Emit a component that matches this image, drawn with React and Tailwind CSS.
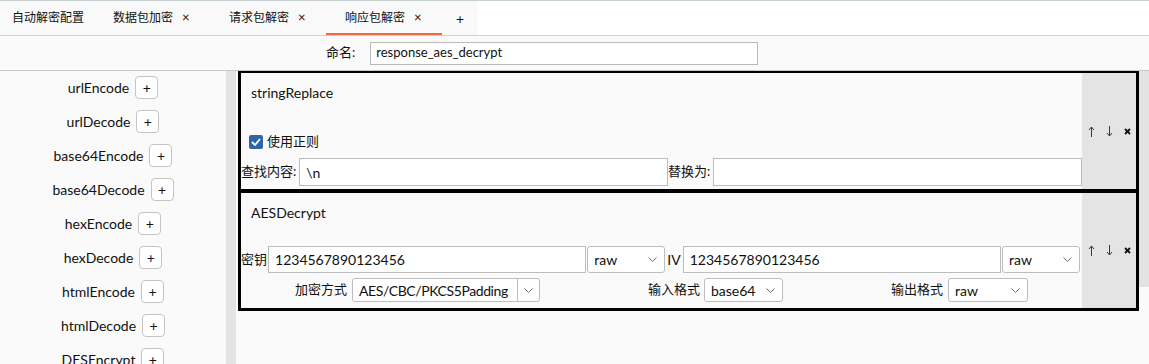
import React from "react";

function Chevron() {
  return (
    <svg width="9" height="5" viewBox="0 0 9 5" className="shrink-0">
      <polyline points="0.5,0.5 4.5,4.5 8.5,0.5" fill="none" stroke="#6b6b6b" strokeWidth="1" />
    </svg>
  );
}

function Select({ className, value }) {
  return (
    <div className={className}>
      <span className="flex-1 truncate">{value}</span>
      <span className="pr-[7px] flex items-center"><Chevron /></span>
    </div>
  );
}

function Actions() {
  return (
    <div className="w-[54px] shrink-0 bg-[#e4e4e4] flex items-center">
      <div className="w-[18px] flex justify-center">
        <svg width="7" height="11" viewBox="0 0 7 11">
          <line x1="3.5" y1="1" x2="3.5" y2="11" stroke="#3b3b2a" strokeWidth="1" />
          <polyline points="1,4 3.5,1 6,4" fill="none" stroke="#3b3b2a" strokeWidth="1" />
        </svg>
      </div>
      <div className="w-[18px] flex justify-center">
        <svg width="7" height="11" viewBox="0 0 7 11">
          <line x1="3.5" y1="0" x2="3.5" y2="10" stroke="#3b3b2a" strokeWidth="1" />
          <polyline points="1,7 3.5,10 6,7" fill="none" stroke="#3b3b2a" strokeWidth="1" />
        </svg>
      </div>
      <div className="w-[18px] flex justify-center">
        <svg width="7" height="7" viewBox="0 0 7 7">
          <line x1="1" y1="1" x2="6" y2="6" stroke="#111" strokeWidth="1.8" />
          <line x1="6" y1="1" x2="1" y2="6" stroke="#111" strokeWidth="1.8" />
        </svg>
      </div>
    </div>
  );
}

const items = [
  "urlEncode",
  "urlDecode",
  "base64Encode",
  "base64Decode",
  "hexEncode",
  "hexDecode",
  "htmlEncode",
  "htmlDecode",
  "DESEncrypt",
  "DESDecrypt",
];

const inputCls =
  "flex-1 min-w-0 h-full bg-white border border-[#bdbdbd] flex items-center pl-[6px] text-[14px]";
const selCls =
  "w-[78px] shrink-0 h-full bg-white border border-[#bdbdbd] rounded-[3px] flex items-center pl-[6px] text-[14px]";

export default function App() {
  return (
    <div className="w-[1149px] h-[364px] overflow-hidden bg-[#fafafa] text-[#111] flex flex-col font-[family-name:Lato,'Noto_Sans_CJK_SC',sans-serif]">
      <div className="h-px bg-[#c7d1d1] shrink-0" />
      {/* tabs */}
      <div className="h-[35px] shrink-0 border-b border-[#d2d2d2] bg-white flex text-[12px]">
        <div className="flex bg-[#f9f9f9] h-full">
          <div className="w-[94px] pl-[12px] flex items-center">自动解密配置</div>
          <div className="w-[116px] pl-[19px] flex items-center">
            <span>数据包加密</span>
            <span className="ml-[9px] text-[13px]">×</span>
          </div>
          <div className="w-[116px] pl-[19px] flex items-center">
            <span>请求包解密</span>
            <span className="ml-[9px] text-[13px]">×</span>
          </div>
          <div className="w-[116px] pl-[19px] flex items-center relative">
            <span>响应包解密</span>
            <span className="ml-[9px] text-[13px]">×</span>
            <div className="absolute left-0 right-0 bottom-0 h-[2px] bg-[#f4693b]" />
          </div>
          <div className="w-[36px] flex items-center justify-center text-[14px]">+</div>
        </div>
      </div>
      {/* name row */}
      <div className="h-[35px] shrink-0 border-b border-[#c9c9c9] flex items-center pl-[326px] text-[13px]">
        <span>命名:</span>
        <div className="ml-[15px] w-[388px] h-[23px] bg-white border border-[#b9b9b9] flex items-center pl-[5px] text-[13px]">
          response_aes_decrypt
        </div>
      </div>
      {/* main */}
      <div className="flex flex-1 min-h-0">
        <div className="w-[226px] shrink-0 flex flex-col items-center pt-[5px] gap-[11px] text-[14px]">
          {items.map((it) => (
            <div key={it} className="h-[23px] shrink-0 flex items-center gap-[6px]">
              <span>{it}</span>
              <div className="w-[23px] h-[23px] bg-white border border-[#c4c4c4] rounded-[4px] flex items-center justify-center text-[14px]">
                +
              </div>
            </div>
          ))}
        </div>
        <div className="w-[10px] shrink-0 bg-[#e3e3e3]" />
        <div className="flex-1 flex pl-[2px]">
          <div className="w-[901px] shrink-0 flex flex-col">
            {/* box 1 */}
            <div className="h-[120px] shrink-0 border-x-[3px] border-t-2 border-b-2 border-black flex">
              <div className="flex-1 flex flex-col pt-[11px]">
                <div className="h-[17px] leading-[17px] pl-[10px] text-[14px]">stringReplace</div>
                <div className="mt-[33px] h-[15px] flex items-center pl-[8px] text-[13px]">
                  <div className="w-[14px] h-[14px] rounded-[2px] bg-[#2e65a9] flex items-center justify-center">
                    <svg width="10" height="8" viewBox="0 0 10 8">
                      <polyline points="1,4 4,7 9,1" fill="none" stroke="#fff" strokeWidth="1.8" />
                    </svg>
                  </div>
                  <span className="ml-[4px]">使用正则</span>
                </div>
                <div className="mt-[9px] h-[28px] flex items-center text-[13px]">
                  <span className="mr-[3px]">查找内容:</span>
                  <div className={inputCls}>\n</div>
                  <span className="mr-[3px]">替换为:</span>
                  <div className={inputCls}></div>
                </div>
              </div>
              <Actions />
            </div>
            {/* box 2 */}
            <div className="h-[120px] shrink-0 border-x-[3px] border-t-2 border-b-[3px] border-black flex">
              <div className="flex-1 flex flex-col pt-[11px]">
                <div className="h-[17px] leading-[17px] pl-[10px] text-[14px]">AESDecrypt</div>
                <div className="mt-[25px] h-[27px] flex items-center text-[13px]">
                  <span className="mr-[1px]">密钥</span>
                  <div className={inputCls}>1234567890123456</div>
                  <Select className={selCls + " ml-[1px]"} value="raw" />
                  <span className="ml-[2px] mr-[2px] text-[14px]">IV</span>
                  <div className={inputCls}>1234567890123456</div>
                  <Select className={selCls + " ml-[1px] mr-[2px]"} value="raw" />
                </div>
                <div className="mt-[5px] h-[24px] flex items-center justify-around text-[13px]">
                  <div className="flex items-center h-full">
                    <span className="mr-[5px]">加密方式</span>
                    <div className="w-[188px] h-full bg-white border border-[#bdbdbd] rounded-[3px] flex items-stretch text-[14px]">
                      <div className="flex-1 min-w-0 overflow-hidden whitespace-nowrap flex items-center pl-[6px] tracking-[-0.4px]">
                        AES/CBC/PKCS5Padding
                      </div>
                      <div className="w-[22px] border-l border-[#bdbdbd] flex items-center justify-center">
                        <Chevron />
                      </div>
                    </div>
                  </div>
                  <div className="flex items-center h-full">
                    <span className="mr-[4px]">输入格式</span>
                    <Select className={selCls + " w-[79px]"} value="base64" />
                  </div>
                  <div className="flex items-center h-full">
                    <span className="mr-[5px]">输出格式</span>
                    <Select className={selCls + " w-[80px]"} value="raw" />
                  </div>
                </div>
              </div>
              <Actions />
            </div>
          </div>
          <div className="w-[10px] shrink-0 flex flex-col">
            <div className="h-[216px] bg-[#e3e3e3]" />
          </div>
        </div>
      </div>
    </div>
  );
}
